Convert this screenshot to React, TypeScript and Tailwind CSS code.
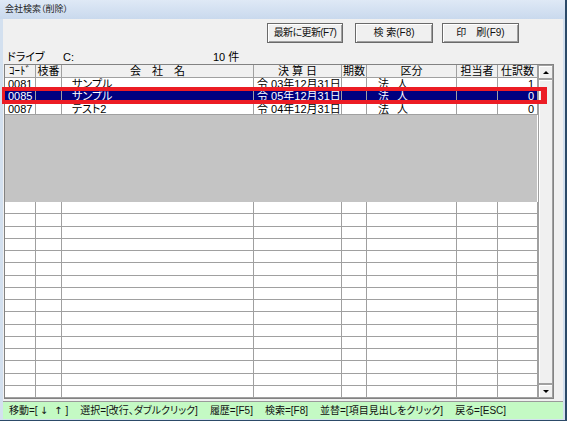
import React from "react";

const EMPTY_ROWS = Array.from({ length: 16 }, (_, i) => i);

type Row = { code: string; name: string; date: string; count: string; sel?: boolean };

const ROWS: Row[] = [
  { code: "0081", name: "サンプル", date: "03年12月31日", count: "1" },
  { code: "0085", name: "サンプル", date: "05年12月31日", count: "0", sel: true },
  { code: "0087", name: "テスト2", date: "04年12月31日", count: "0" },
];

const GRID = "grid grid-cols-[31px_26px_192px_88px_25px_90px_41px_40px]";

function Btn({ children, w, ml }: { children: React.ReactNode; w: string; ml: string }) {
  return (
    <div
      className={`${w} ${ml} h-[20px] flex items-center justify-center border border-[#6a6a6a] bg-[#f0f0f0] shadow-[inset_1px_1px_0_#ffffff,inset_-1px_-1px_0_#a0a0a0] text-[10px] leading-none text-[#111]`}
    >
      {children}
    </div>
  );
}

function RaisedBox({ className, children }: { className: string; children?: React.ReactNode }) {
  return (
    <div
      className={`${className} border border-[#a0a0a0] bg-[#f0f0f0] shadow-[inset_1px_1px_0_#ffffff] flex items-center justify-center`}
    >
      {children}
    </div>
  );
}

export default function App() {
  const cell = "border-r border-b border-[#a0a0a0] overflow-hidden whitespace-nowrap";
  return (
    <div className="relative w-[567px] h-[421px] overflow-hidden bg-[#d3e0ef] flex flex-col border-r-2 border-b border-[#2c4a68] text-black [font-family:'Liberation_Sans','Noto_Sans_CJK_JP',sans-serif] [font-feature-settings:'palt']">
      {/* title bar */}
      <div className="h-[19px] shrink-0 flex items-center pl-[5px] text-[9px] text-[#1e1e1e] bg-gradient-to-b from-[#dfe9f6] to-[#c9d9ed]">
        会社検索（削除）
      </div>

      {/* body */}
      <div className="flex-1 flex pl-[3px] pr-[2px] pb-[1px]">
        <div className="flex-1 bg-[#f0f0f0] flex flex-col">
          {/* buttons */}
          <div className="mt-[4px] h-[20px] flex pl-[264px]">
            <Btn w="w-[76px]" ml="ml-0">
              <span className="tracking-[-0.6px]">最新に更新(F7)</span>
            </Btn>
            <Btn w="w-[78px]" ml="ml-[12px]">検 索(F8)</Btn>
            <Btn w="w-[77px]" ml="ml-[9px]">印　刷(F9)</Btn>
          </div>

          {/* drive line */}
          <div className="mt-[8px] h-[12px] flex items-center text-[11px] leading-none">
            <span className="ml-[4px] w-[56px]">ドライブ</span>
            <span className="w-[150px]">C:</span>
            <span>10 件</span>
          </div>

          {/* table */}
          <div className="mt-[1px] ml-[1px] w-[550px] h-[335px] border border-[#828282] flex bg-white">
            <div className="w-[533px] flex flex-col text-[11px] leading-[12px]">
              {/* header */}
              <div className={`${GRID} h-[13px] bg-[#f0f0f0] text-center`}>
                <div className={cell}>ｺｰﾄﾞ</div>
                <div className={cell}>枝番</div>
                <div className={cell}>会　社　名</div>
                <div className={cell}>決 算 日</div>
                <div className={cell}>期数</div>
                <div className={cell}>区分</div>
                <div className={cell}>担当者</div>
                <div className={cell}>仕訳数</div>
              </div>

              {/* data rows */}
              {ROWS.map((r, i) => (
                <div
                  key={r.code}
                  className={`${GRID} ${i === 1 ? "h-[13px]" : "h-[12px]"} ${r.sel ? "bg-[#000080] text-white" : "bg-white text-black"}`}
                >
                  <div className={`${cell} pl-[3px]`}>{r.code}</div>
                  <div className={cell}></div>
                  <div className={`${cell} pl-[10px]`}>{r.name}</div>
                  <div className={`${cell} pl-[3px]`}>令 {r.date}</div>
                  <div className={cell}></div>
                  <div className={`${cell} pl-[11px]`}>
                    <span>法</span>
                    <span className="ml-[8px]">人</span>
                  </div>
                  <div className={cell}></div>
                  <div className={`${cell} text-right pr-[3px]`}>{r.count}</div>
                </div>
              ))}

              {/* gray empty region */}
              <div className="h-[87px] bg-[#c4c4c4] border-r border-[#ffffff]"></div>

              {/* empty rows */}
              {EMPTY_ROWS.map((i) => (
                <div key={i} className={`${GRID} h-[12.25px] bg-white`}>
                  <div className={cell}></div>
                  <div className={cell}></div>
                  <div className={cell}></div>
                  <div className={cell}></div>
                  <div className={cell}></div>
                  <div className={cell}></div>
                  <div className={cell}></div>
                  <div className={cell}></div>
                </div>
              ))}
            </div>

            {/* scrollbar */}
            <div className="w-[15px] flex flex-col bg-[#f0f0f0]">
              <RaisedBox className="h-[14px]">
                <div className="w-0 h-0 border-l-[3px] border-r-[3px] border-b-[3px] border-l-transparent border-r-transparent border-b-black"></div>
              </RaisedBox>
              <RaisedBox className="flex-1" />
              <RaisedBox className="h-[14px]">
                <div className="w-0 h-0 border-l-[3px] border-r-[3px] border-t-[3px] border-l-transparent border-r-transparent border-t-black"></div>
              </RaisedBox>
            </div>
          </div>

          {/* status bar */}
          <div className="mt-[2px] h-[18px] bg-[#c4fac4] border-t border-[#9a9a9a] flex items-center text-[10px] leading-none text-[#111] whitespace-nowrap">
            <span className="shrink-0 ml-[6px] flex items-center">
              移動=[
              <span className="ml-[2px] [font-family:'DejaVu_Sans',sans-serif] text-[10px]">↓</span>
              <span className="ml-[6px] [font-family:'DejaVu_Sans',sans-serif] text-[10px]">↑</span>
              <span className="ml-[3px]">]</span>
            </span>
            <span className="shrink-0 ml-[12px]">選択=[改行、ダブルクリック]</span>
            <span className="shrink-0 ml-[12px]">履歴=[F5]</span>
            <span className="shrink-0 ml-[12px]">検索=[F8]</span>
            <span className="shrink-0 ml-[12px]">並替=[項目見出しをクリック]</span>
            <span className="shrink-0 ml-[12px]">戻る=[ESC]</span>
          </div>
        </div>
      </div>

      {/* red highlight rectangle overlay */}
      <div className="absolute left-[2px] top-[87px] w-[545px] h-[17px] border-t-4 border-b-4 border-l-[3px] border-r-[6px] border-[#ec1c24] pointer-events-none"></div>
    </div>
  );
}
